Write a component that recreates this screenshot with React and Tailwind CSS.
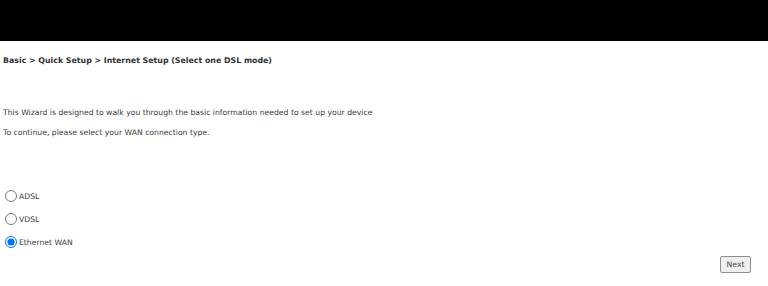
import React, { useState } from 'react';

const options = ['ADSL', 'VDSL', 'Ethernet WAN'];

const App = () => {
  const [mode, setMode] = useState('Ethernet WAN');

  return (
    <div className="w-[768px] h-[286px] bg-white text-[#3c3c3c] overflow-hidden" style={{ fontFamily: 'Tahoma, "DejaVu Sans", sans-serif' }}>
      {/* Top banner */}
      <div className="h-[41px] bg-black" />

      <div className="px-[3px]">
        <div className="pt-[14px] h-[40px] text-[7.85px] font-bold text-[#333]">
          Basic &gt; Quick Setup &gt; Internet Setup (Select one DSL mode)
        </div>

        <div className="pt-[22px] text-[7.7px] leading-[20px]">
          <p>This Wizard is designed to walk you through the basic information needed to set up your device</p>
          <p>To continue, please select your WAN connection type.</p>
        </div>

        <div className="pt-[46px] flex flex-col gap-[10px] text-[7.7px]">
          {options.map(opt => (
            <label key={opt} className="flex items-end h-[13px]">
              <input
                type="radio"
                name="wan"
                checked={mode === opt}
                onChange={() => setMode(opt)}
                className="w-[12px] h-[12px] ml-[2px] mr-[2px] m-0 accent-[#0075ff]"
              />
              <span className="leading-[10px]">{opt}</span>
            </label>
          ))}
        </div>

        <div className="flex justify-end pr-[14px] mt-[8px]">
          <button className="h-[17px] w-[31px] text-[7.7px] text-[#444] bg-[#efefef] border border-[#8f8f8f] rounded-[2px]">
            Next
          </button>
        </div>
      </div>
    </div>
  );
};

export default App;
